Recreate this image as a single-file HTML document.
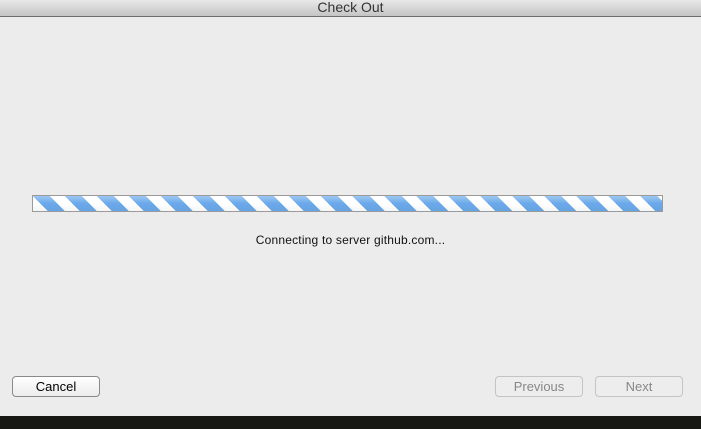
<!DOCTYPE html>
<html><head><style>
body{margin:0;width:701px;height:429px;overflow:hidden;background:#ececec;font-family:"Liberation Sans",sans-serif;position:relative}
.title{position:absolute;left:0;top:0;width:701px;height:16px;background:linear-gradient(#e8e8e8,#c4c4c4);border-bottom:1px solid #6e6e6e;text-align:center;font-size:14px;line-height:15px;color:#333}
.bar{position:absolute;left:32px;top:195px;width:629px;height:15px;border:1px solid #9a9a9a;background:repeating-linear-gradient(45deg,#fff 0 10.5px,#6aa9ea 10.5px 22.6px);overflow:hidden}
.bar:after{content:"";position:absolute;inset:0;background:linear-gradient(rgba(255,255,255,.35),rgba(255,255,255,0) 50%,rgba(0,0,0,.04))}
.msg{position:absolute;left:0;width:701px;top:233px;text-align:center;font-size:12px;color:#111;letter-spacing:.2px}
.btn{position:absolute;top:376px;height:19px;width:86px;border:1px solid #8a8a8a;border-radius:4px;background:linear-gradient(#fff,#ececec);text-align:center;font-size:13px;line-height:19px;color:#000}
.dis{border-color:#c4c4c4;color:#888;background:#ededed}
.foot{position:absolute;left:0;top:416px;width:701px;height:13px;background:#171714}
</style></head><body>
<div class="title">Check Out</div>
<div class="bar"></div>
<div class="msg">Connecting to server github.com...</div>
<div class="btn" style="left:12px">Cancel</div>
<div class="btn dis" style="left:495px">Previous</div>
<div class="btn dis" style="left:595px">Next</div>
<div class="foot"></div>
</body></html>
